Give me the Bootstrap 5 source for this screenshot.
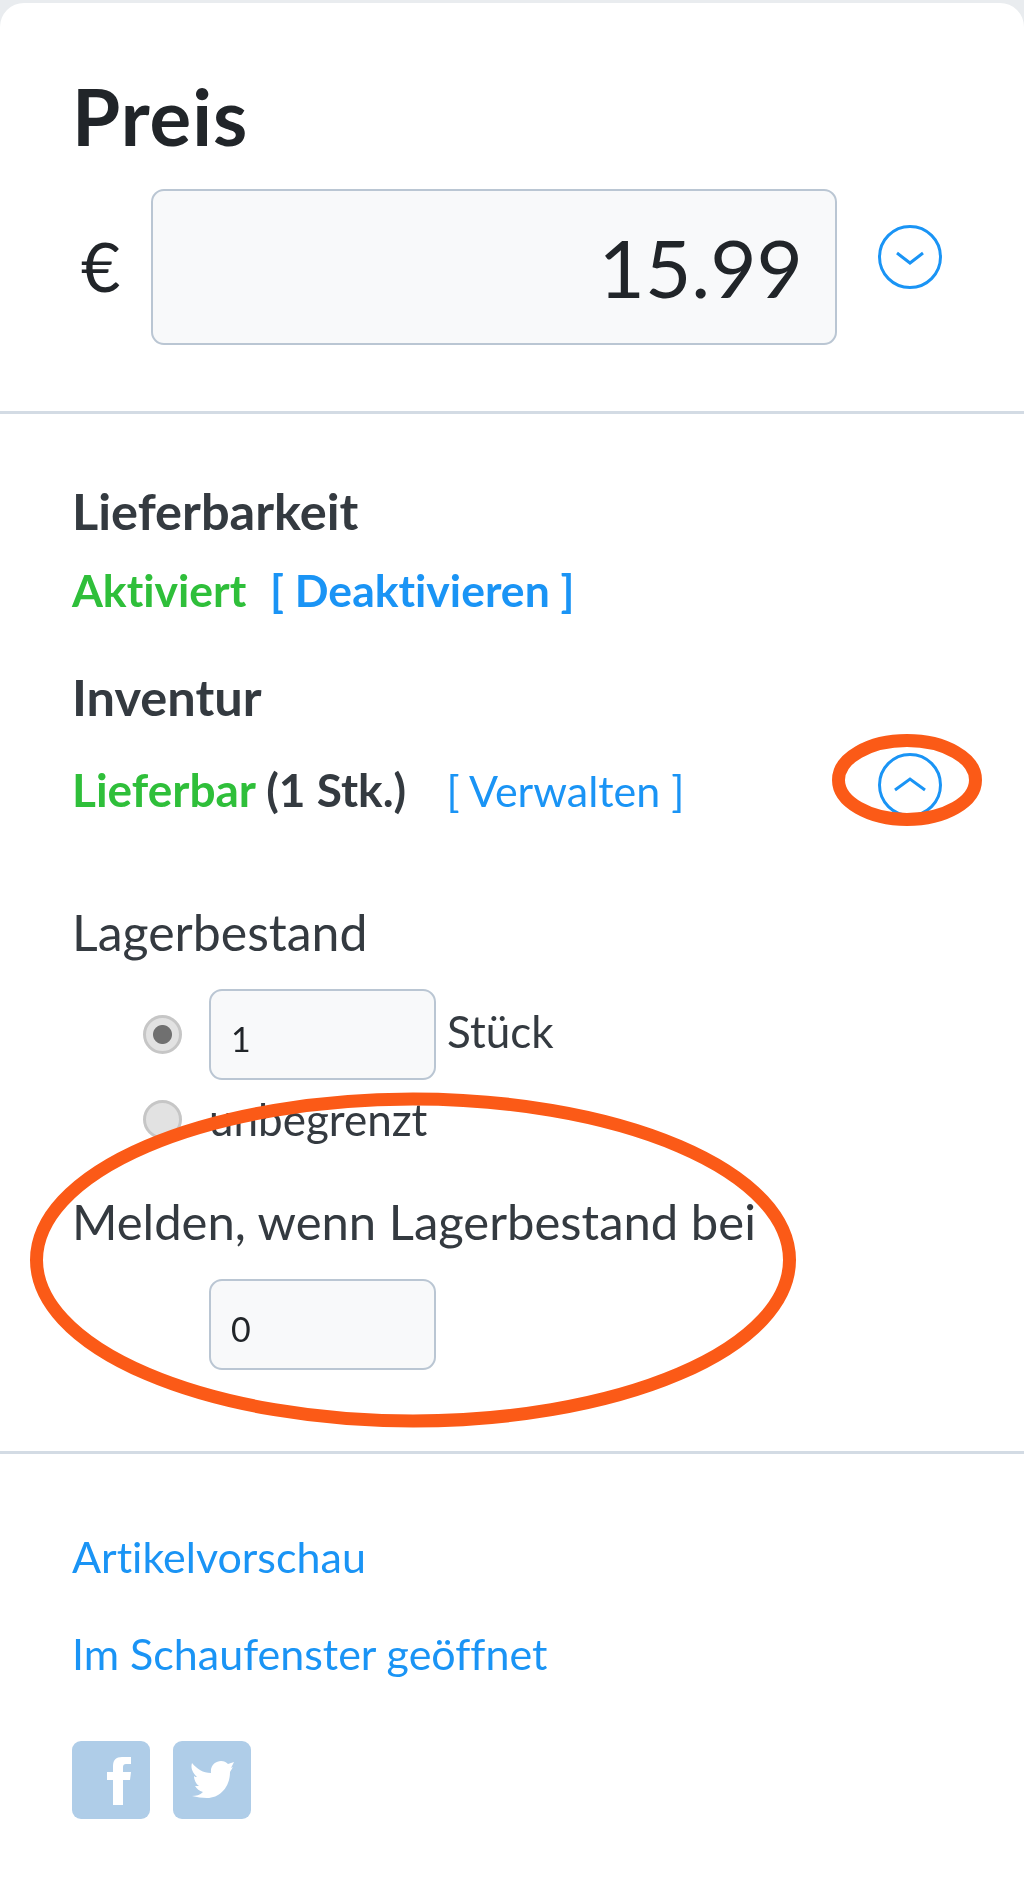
<!DOCTYPE html>
<html lang="de">
<head>
<meta charset="utf-8">
<title>Preis</title>
<link href="https://cdn.jsdelivr.net/npm/bootstrap@5.3.0/dist/css/bootstrap.min.css" rel="stylesheet">
<style>
html,body{height:1897px;overflow:hidden}
body{background:#e9ecef;padding-top:3px;font-family:"Lato","Noto Sans",sans-serif;font-variant-ligatures:none;color:#343a40;font-size:44px}
.sheet{height:1894px;border:0;border-radius:24px 24px 0 0;background:#fff;position:relative;overflow:hidden;filter:blur(.6px)}
.sec-price{height:411px;padding:73px 0 0 72px;border-bottom:3px solid #d3dbe4}
.sec-stock{padding:70px 82px 0 72px;border-bottom:3px solid #d3dbe4;box-sizing:content-box;height:967px}
.sec-links{padding:78px 0 0 72px}
.price-title{font-size:78px;letter-spacing:1px;font-weight:700;color:#212529;line-height:80px;margin:0 0 33px}
.euro{font-size:68px;color:#212529;width:79px;padding-left:9px;line-height:156px;margin-top:-1px}
.form-control.price-box{width:686px;height:156px;flex:none;background:#f8f9fa;border:2px solid #bac6d3;border-radius:13px;text-align:right;font-size:80px;color:#212529;padding:0 32px 0 0;box-shadow:none}
.toggle{flex:none;width:64px;height:64px;display:block}
.toggle-down{margin:36px 0 0 41px}
.toggle-up{margin:-32px 0 -20px}
.sub-title{font-size:50.500px;font-weight:700;color:#343a40;line-height:54px;margin:0}
.sub-second{margin-top:55px}
.status{font-weight:700;line-height:50px}
.status-on{font-size:44.500px;margin-top:27px}
.status-stock{font-size:46px;margin-top:41px}
.green{color:#2fbf3a}
.blue-link{color:#1a94f5;text-decoration:none}
.deact-link{margin-left:13px}
.manage-link{font-size:43px;font-weight:400;margin-left:29px}
.dark{color:#343a40}
.plain-label{line-height:56px;color:#343a40;margin:0}
.label-stock{font-size:50px;margin-top:88px}
.label-alert{font-size:49px;margin-top:49px}
.num-row{margin-left:71px}
.row-first{margin-top:29px}
.row-second{margin-top:14px}
.row-alert{margin-top:30px;padding-left:66px}
.radio-dot.form-check-input{appearance:none;width:39px;height:39px;margin:0;flex:none;border:3px solid #c6c6c6;border-radius:50%;background:#e2e2e2;box-shadow:none}
.radio-dot.form-check-input:checked{background:radial-gradient(circle,#707070 0 9px,#e2e2e2 10px);border-color:#c6c6c6}
.form-control.num-box{width:227px;height:91px;flex:none;background:#f8f9fa;border:2px solid #bac6d3;border-radius:13px;font-size:34px;color:#212529;padding:8px 0 0 20px;box-shadow:none}
.box-gap{margin-left:27px}
.small-text{font-size:44px;line-height:50px;color:#343a40}
.unit-text{margin:-8px 0 0 11px}
.free-text{margin-left:27px}
.mark-ring{position:absolute;pointer-events:none}
.ring-small{left:832px;top:731px}
.ring-large{left:30px;top:1089px}
.plain-link{display:block;font-size:43px;line-height:50px;color:#1a94f5;text-decoration:none}
.link-gap{margin-top:47px}
.share-row{gap:23px;margin-top:62px}
.share-tile{width:78px;height:78px;border-radius:9px;background:#afcde8;display:block}
</style>
</head>
<body>
<div class="card sheet">
  <section class="sec-price">
    <h1 class="price-title">Preis</h1>
    <div class="d-flex align-items-start">
      <div class="euro">€</div>
      <input class="form-control price-box" type="text" value="15.99" aria-label="Preis">
      <svg class="toggle toggle-down" viewBox="0 0 64 64" aria-hidden="true"><circle cx="32" cy="32" r="30.5" fill="none" stroke="#1a94f5" stroke-width="3"/><path d="M19 28l13 10 13-10" fill="none" stroke="#1a94f5" stroke-width="3"/></svg>
    </div>
  </section>
  <section class="sec-stock">
    <h2 class="sub-title">Lieferbarkeit</h2>
    <div class="status status-on"><span class="green">Aktiviert</span> <a class="blue-link deact-link" href="#">[ Deaktivieren ]</a></div>
    <h2 class="sub-title sub-second">Inventur</h2>
    <div class="status status-stock d-flex justify-content-between align-items-center">
      <div><span class="green">Lieferbar</span> <span class="dark">(1 Stk.)</span> <a class="blue-link manage-link" href="#">[ Verwalten ]</a></div>
      <svg class="toggle toggle-up" viewBox="0 0 64 64" aria-hidden="true"><circle cx="32" cy="32" r="30.5" fill="none" stroke="#1a94f5" stroke-width="3"/><path d="M17 37l15-11 15 11" fill="none" stroke="#1a94f5" stroke-width="3"/></svg>
    </div>
    <p class="plain-label label-stock">Lagerbestand</p>
    <div class="d-flex align-items-center num-row row-first">
      <input class="form-check-input radio-dot" type="radio" name="stockmode" checked aria-label="Stück">
      <input class="form-control num-box box-gap" type="text" value="1" aria-label="Stückzahl">
      <span class="small-text unit-text">Stück</span>
    </div>
    <div class="d-flex align-items-center num-row row-second">
      <input class="form-check-input radio-dot" type="radio" name="stockmode" aria-label="unbegrenzt">
      <span class="small-text free-text">unbegrenzt</span>
    </div>
    <p class="plain-label label-alert">Melden, wenn Lagerbestand bei</p>
    <div class="num-row row-alert">
      <input class="form-control num-box" type="text" value="0" aria-label="Meldebestand">
    </div>
  </section>
  <section class="sec-links">
    <a class="plain-link" href="#">Artikelvorschau</a>
    <a class="plain-link link-gap" href="#">Im Schaufenster geöffnet</a>
    <div class="d-flex share-row">
      <svg class="share-tile" viewBox="0 0 78 78" role="img" aria-label="Facebook"><path fill="#fff" d="M41 64V39h-6v-8h6v-6c0-6 3-9 9-9h9v7h-5c-2 0-3 1-3 3v5h8l-1 8h-7v25z"/></svg>
      <svg class="share-tile" viewBox="0 0 78 78" role="img" aria-label="Twitter"><path fill="#fff" d="M19 22c5 6 11 10 19 10-1-8 5-12 10-12 3 0 5 1 7 3l6-2-3 6 2-1-3 5c0 15-10 26-23 26-5 0-10-1-15-2 4 0 8-1 11-4-4-1-6-3-8-6h4c-3-2-5-6-5-10 1 1 2 1 3 1-3-3-7-8-5-14z"/></svg>
    </div>
  </section>
  <svg class="mark-ring ring-small" width="150" height="92" viewBox="0 0 150 92" aria-hidden="true"><ellipse cx="75" cy="46" rx="68.500" ry="39.500" fill="none" stroke="#fb5a17" stroke-width="13"/></svg>
  <svg class="mark-ring ring-large" width="766" height="336" viewBox="0 0 766 336" aria-hidden="true"><ellipse cx="383" cy="168" rx="376.500" ry="161" fill="none" stroke="#fb5a17" stroke-width="13"/></svg>
</div>
</body>
</html>
